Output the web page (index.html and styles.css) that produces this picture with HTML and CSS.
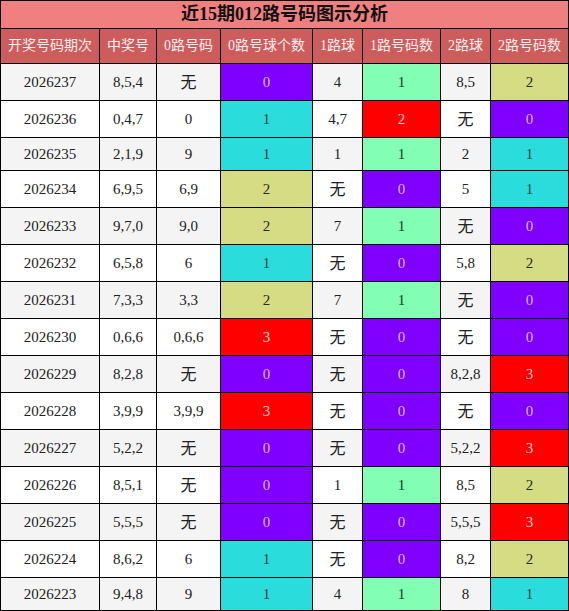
FILE: index.html
```html
<!DOCTYPE html>
<html>
<head>
<meta charset="utf-8">
<link rel="stylesheet" href="styles.css">
</head>
<body>
<table class="chart">
<colgroup>
<col class="c1"><col class="c2"><col class="c3"><col class="c4"><col class="c5"><col class="c6"><col class="c7"><col class="c8">
</colgroup>
<thead>
<tr><th class="title" colspan="8">近15期012路号码图示分析</th></tr>
<tr class="head">
<th>开奖号码期次</th><th>中奖号</th><th>0路号码</th><th>0路号球个数</th><th>1路球</th><th>1路号码数</th><th>2路球</th><th>2路号码数</th>
</tr>
</thead>
<tbody>
<tr class="odd"><td>2026237</td><td>8,5,4</td><td><span class="wu">无</span></td><td class="pu">0</td><td>4</td><td class="gr">1</td><td>8,5</td><td class="ye">2</td></tr>
<tr><td>2026236</td><td>0,4,7</td><td>0</td><td class="cy">1</td><td>4,7</td><td class="rd">2</td><td><span class="wu">无</span></td><td class="pu">0</td></tr>
<tr class="odd"><td>2026235</td><td>2,1,9</td><td>9</td><td class="cy">1</td><td>1</td><td class="gr">1</td><td>2</td><td class="cy">1</td></tr>
<tr><td>2026234</td><td>6,9,5</td><td>6,9</td><td class="ye">2</td><td><span class="wu">无</span></td><td class="pu">0</td><td>5</td><td class="cy">1</td></tr>
<tr class="odd"><td>2026233</td><td>9,7,0</td><td>9,0</td><td class="ye">2</td><td>7</td><td class="gr">1</td><td><span class="wu">无</span></td><td class="pu">0</td></tr>
<tr><td>2026232</td><td>6,5,8</td><td>6</td><td class="cy">1</td><td><span class="wu">无</span></td><td class="pu">0</td><td>5,8</td><td class="ye">2</td></tr>
<tr class="odd"><td>2026231</td><td>7,3,3</td><td>3,3</td><td class="ye">2</td><td>7</td><td class="gr">1</td><td><span class="wu">无</span></td><td class="pu">0</td></tr>
<tr><td>2026230</td><td>0,6,6</td><td>0,6,6</td><td class="rd">3</td><td><span class="wu">无</span></td><td class="pu">0</td><td><span class="wu">无</span></td><td class="pu">0</td></tr>
<tr class="odd"><td>2026229</td><td>8,2,8</td><td><span class="wu">无</span></td><td class="pu">0</td><td><span class="wu">无</span></td><td class="pu">0</td><td>8,2,8</td><td class="rd">3</td></tr>
<tr><td>2026228</td><td>3,9,9</td><td>3,9,9</td><td class="rd">3</td><td><span class="wu">无</span></td><td class="pu">0</td><td><span class="wu">无</span></td><td class="pu">0</td></tr>
<tr class="odd"><td>2026227</td><td>5,2,2</td><td><span class="wu">无</span></td><td class="pu">0</td><td><span class="wu">无</span></td><td class="pu">0</td><td>5,2,2</td><td class="rd">3</td></tr>
<tr><td>2026226</td><td>8,5,1</td><td><span class="wu">无</span></td><td class="pu">0</td><td>1</td><td class="gr">1</td><td>8,5</td><td class="ye">2</td></tr>
<tr class="odd"><td>2026225</td><td>5,5,5</td><td><span class="wu">无</span></td><td class="pu">0</td><td><span class="wu">无</span></td><td class="pu">0</td><td>5,5,5</td><td class="rd">3</td></tr>
<tr><td>2026224</td><td>8,6,2</td><td>6</td><td class="cy">1</td><td><span class="wu">无</span></td><td class="pu">0</td><td>8,2</td><td class="ye">2</td></tr>
<tr class="odd"><td>2026223</td><td>9,4,8</td><td>9</td><td class="cy">1</td><td>4</td><td class="gr">1</td><td>8</td><td class="cy">1</td></tr>
</tbody>
</table>
</body>
</html>
```
FILE: styles.css
```css
html, body {
  margin: 0;
  padding: 0;
  background: #ffffff;
}
.chart {
  width: 569px;
  table-layout: fixed;
  border-collapse: collapse;
  font-family: "Liberation Serif", "Noto Sans CJK SC", serif;
  color: #222222;
}
.c1 { width: 99px; }
.c2 { width: 57px; }
.c3 { width: 64px; }
.c4 { width: 92px; }
.c5 { width: 50px; }
.c6 { width: 78px; }
.c7 { width: 50px; }
.c8 { width: 78px; }
.chart th, .chart td {
  border: 1px solid #000000;
  text-align: center;
  padding: 0;
  white-space: nowrap;
  overflow: hidden;
}
.title {
  height: 27px;
  background: #f08080;
  color: #111111;
  font-size: 18px;
  font-weight: bold;
  line-height: 27px;
}
.head th {
  height: 34px;
  background: #cd5c5c;
  color: #f4eeee;
  font-weight: normal;
  font-size: 14px;
  line-height: 34px;
}
.chart td {
  font-size: 15px;
  line-height: 16px;
  padding: 8px 0;
  background: #ffffff;
}
.chart tr.odd td {
  background: #f4f4f4;
}
.wu {
  font-size: 16px;
  line-height: 18px;
  padding-top: 2px;
  display: inline-block;
  vertical-align: top;
}
.chart tr td.pu { background: #8000ff; color: #d9b8ff; }
.chart tr td.cy { background: #2adcdc; color: #1e3c3c; }
.chart tr td.gr { background: #82ffb4; color: #1e3a2a; }
.chart tr td.ye { background: #d6dc84; color: #2a2a1a; }
.chart tr td.rd { background: #ff0000; color: #ffd6d6; }
```
